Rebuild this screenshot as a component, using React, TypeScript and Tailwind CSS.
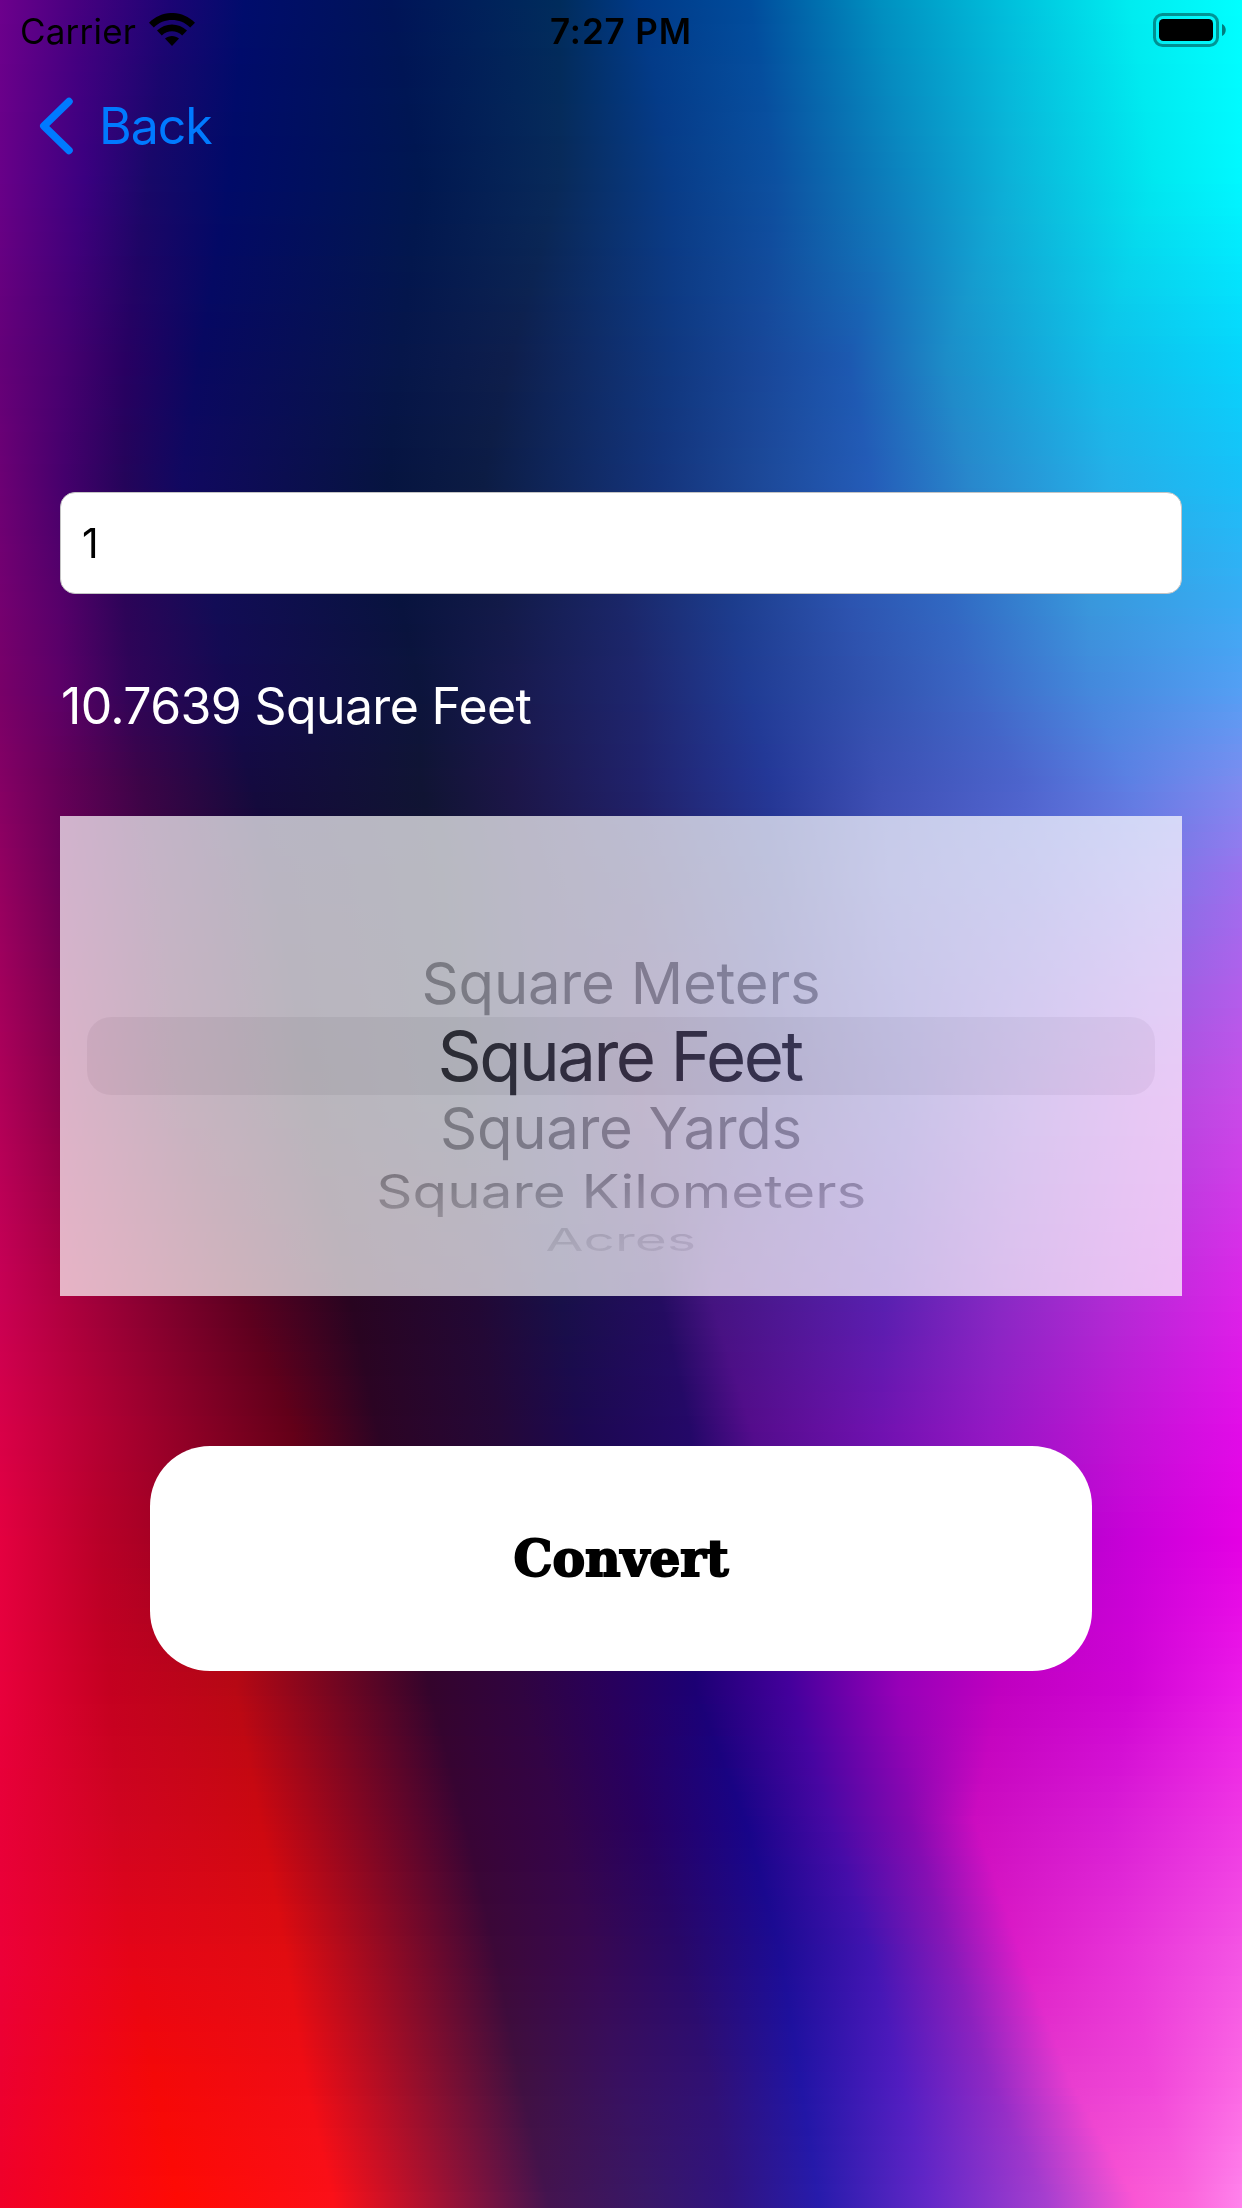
import React from "react";

type Stop = [number, string];
type Row = { y: number; stops: Stop[] };

// Colour field of the wallpaper: twelve colour ridges followed from top to bottom.
const FIELD: Row[] = [
  { y: 0, stops: [[0, "6c008c"], [75, "480080"], [170, "1c0474"], [245, "000c6c"], [390, "001458"], [560, "002c5c"], [640, "003a88"], [750, "004c9c"], [880, "0090c0"], [1010, "00c0dc"], [1130, "00ecf0"], [1242, "00ffff"]] },
  { y: 180, stops: [[0, "680088"], [85, "3a0080"], [148, "180868"], [230, "000a68"], [420, "001750"], [560, "082a5a"], [673, "083c88"], [776, "0c50a0"], [905, "0c86c0"], [1010, "0cb2d8"], [1155, "00e8f0"], [1242, "00f8ff"]] },
  { y: 360, stops: [[0, "640078"], [63, "480070"], [125, "280062"], [200, "080860"], [400, "06164a"], [510, "0e1e4c"], [673, "103880"], [760, "184698"], [848, "1c58b0"], [945, "1c8cc8"], [1100, "10bee8"], [1242, "06d4fc"]] },
  { y: 480, stops: [[0, "6c0074"], [65, "44006c"], [125, "24045a"], [182, "100860"], [388, "061440"], [483, "0c1c44"], [660, "14347c"], [760, "1c4898"], [871, "245cb8"], [970, "2888cc"], [1110, "24b0e8"], [1242, "18c0f8"]] },
  { y: 600, stops: [[0, "740070"], [60, "56006a"], [125, "2c0458"], [215, "120c56"], [400, "08133e"], [500, "121a48"], [620, "1a2668"], [730, "1c3c8c"], [850, "2c54b0"], [950, "3068c2"], [1090, "3898dc"], [1242, "38acf4"]] },
  { y: 690, stops: [[0, "780068"], [60, "5c0068"], [130, "300458"], [230, "140a50"], [420, "0c143c"], [520, "181a50"], [640, "1e266e"], [750, "203c94"], [860, "3050ac"], [970, "3c66c4"], [1090, "4488dc"], [1242, "549ff4"]] },
  { y: 780, stops: [[0, "840064"], [60, "640058"], [140, "3c0448"], [250, "140a40"], [420, "101434"], [510, "1c1648"], [640, "20226c"], [770, "243898"], [880, "3c50b4"], [1020, "4c64cc"], [1130, "5c80e4"], [1242, "7c8cf0"]] },
  { y: 830, stops: [[0, "8c0062"], [60, "680057"], [150, "3c0444"], [265, "140938"], [430, "111432"], [520, "1c1648"], [640, "211f66"], [770, "263592"], [885, "4250b6"], [1025, "5464d0"], [1140, "6c78e2"], [1242, "8c80f0"]] },
  { y: 880, stops: [[0, "940060"], [60, "6c0056"], [160, "3c0440"], [280, "140830"], [440, "121430"], [530, "1c1648"], [640, "221c60"], [770, "28328c"], [890, "4850b8"], [1030, "5c60d0"], [1150, "7c74e4"], [1242, "9c70ee"]] },
  { y: 1100, stops: [[0, "b00058"], [60, "8a0048"], [180, "480430"], [310, "180820"], [460, "121430"], [560, "1c1450"], [640, "301058"], [760, "302080"], [900, "4c38b0"], [1030, "8048cc"], [1150, "b048dc"], [1242, "c84ce8"]] },
  { y: 1296, stops: [[0, "c80054"], [63, "ae0040"], [240, "5c0020"], [350, "280420"], [475, "220834"], [560, "181048"], [660, "240c60"], [710, "441480"], [885, "5820b0"], [1000, "882ac4"], [1110, "b02cd4"], [1242, "dc24e8"]] },
  { y: 1430, stops: [[0, "d80048"], [95, "b40034"], [295, "620018"], [378, "2c0424"], [500, "240838"], [580, "1c0850"], [690, "240868"], [752, "540c8c"], [880, "7012b0"], [990, "9418c4"], [1120, "c014d4"], [1242, "e20ce8"]] },
  { y: 1540, stops: [[0, "e40040"], [100, "b80028"], [270, "800018"], [405, "300428"], [510, "28043c"], [620, "1c0858"], [700, "200470"], [780, "480490"], [900, "7808b0"], [1020, "a804c4"], [1130, "c800d8"], [1242, "e400e4"]] },
  { y: 1690, stops: [[0, "e8003c"], [110, "c40020"], [235, "b80814"], [430, "34042c"], [520, "300440"], [610, "28005c"], [695, "1c0074"], [790, "44009c"], [900, "9800b8"], [1000, "c000c0"], [1130, "d004d4"], [1242, "ec1ce8"]] },
  { y: 1820, stops: [[0, "e80038"], [120, "d00420"], [260, "cc0810"], [465, "380434"], [560, "340448"], [640, "280060"], [745, "180488"], [830, "4808a4"], [910, "8408b0"], [975, "cc0cc0"], [1110, "d81cd4"], [1242, "f038e4"]] },
  { y: 1950, stops: [[0, "ec0038"], [130, "e40418"], [285, "e00c10"], [495, "3c0838"], [590, "380850"], [680, "280868"], [780, "1c0c94"], [870, "4014b0"], [950, "8818b8"], [1020, "dc1cc8"], [1130, "e834d8"], [1242, "f454e4"]] },
  { y: 2080, stops: [[0, "ec0030"], [155, "f40808"], [305, "f00c14"], [520, "401040"], [620, "381060"], [710, "301074"], [800, "2014a4"], [900, "501cc0"], [990, "9028c4"], [1070, "e83cd0"], [1150, "f044d8"], [1242, "fc68e4"]] },
  { y: 2208, stops: [[0, "f00028"], [180, "ff0a04"], [335, "fc1018"], [550, "441450"], [650, "381868"], [730, "301480"], [820, "281cac"], [930, "6428c8"], [1050, "a840d0"], [1140, "fc58d4"], [1190, "fc68dc"], [1242, "ff84ec"]] },
];

const STRIP = 8;
const channel = (c: string, i: number) => parseInt(c.slice(i * 2, i * 2 + 2), 16);

function stripGradient(y: number) {
  let k = 0;
  while (k < FIELD.length - 2 && FIELD[k + 1].y < y) k++;
  const a = FIELD[k];
  const b = FIELD[k + 1];
  const t = (y - a.y) / (b.y - a.y);
  const mix = (p: number, q: number) => p + (q - p) * t;
  const stops = a.stops.map(([x, c], i) => {
    const [x2, c2] = b.stops[i];
    const rgb = [0, 1, 2].map((n) => Math.round(mix(channel(c, n), channel(c2, n))));
    return `rgb(${rgb.join(",")}) ${mix(x, x2).toFixed(1)}px`;
  });
  return `linear-gradient(to right, ${stops.join(", ")})`;
}

function Wallpaper() {
  return (
    <div className="absolute inset-0 flex flex-col overflow-hidden" aria-hidden="true">
      {Array.from({ length: 2208 / STRIP }, (_, i) => (
        <div key={i} className="h-2 w-full shrink-0" style={{ backgroundImage: stripGradient(i * STRIP + STRIP / 2) }} />
      ))}
    </div>
  );
}

function StatusBar() {
  return (
    <header className="grid h-[60px] grid-cols-3 items-start text-[35px] leading-[62px] text-black">
      <div className="flex pl-5">
        <span className="w-[129px] tracking-[0.2px]">Carrier</span>
        <svg className="mt-[13px] h-[33px] w-[46px]" viewBox="0 0 46 33">
          <path d="M0 9.8C13-3.3 33-3.3 46 9.8L41.2 14.4C31 4.600 15 4.600 4.800 14.400Z" />
          <path d="M8 17.600C16.500 9.600 29.500 9.600 38 17.600L33.200 22.400C27.300 17 18.700 17 12.800 22.400Z" />
          <path d="M16 25.600C20 22 26 22 30 25.600L23 33Z" />
        </svg>
      </div>
      <span className="text-center font-semibold tracking-[0.9px]">7:27 PM</span>
      <div className="flex justify-end pr-4 pt-[13px]">
        <svg className="h-[34px] w-[73px]" viewBox="0 0 73 34">
          <rect x="1.500" y="1.500" width="63" height="31" rx="8" fill="none" stroke="#000" strokeOpacity="0.4" strokeWidth="3" />
          <rect x="6" y="6" width="54" height="22" rx="4.500" />
          <path d="M69 11C74 13 74 21 69 23Z" fillOpacity="0.5" />
        </svg>
      </div>
    </header>
  );
}

const UNITS = [
  { name: "Square Meters", box: "h-[74px] mt-[130px]", text: "text-[58px] tracking-[-0.2px] text-[#3e3e3e]" },
  { name: "Square Feet", box: "h-[74px]", text: "pr-[3px] text-[69px] tracking-[-2.5px] text-[#828282]" },
  { name: "Square Yards", box: "h-[69px]", text: "text-[58px] tracking-[-0.3px] text-[#3e3e3e]" },
  {
    name: "Square Kilometers",
    box: "h-[57px]",
    text: "text-[58px] scale-x-[0.975] scale-y-80 bg-linear-to-b from-[#404040] from-20% to-[#282828] to-85% bg-clip-text text-transparent",
  },
  {
    name: "Acres",
    box: "h-[39px]",
    text: "text-[54px] scale-x-[1.02] scale-y-[0.58] bg-linear-to-b from-[#181818] from-20% to-[#0e0e0e] to-85% bg-clip-text text-transparent",
  },
];

function UnitPicker() {
  return (
    <section className="relative mx-[60px] mt-[60px] flex h-[480px] flex-col items-center bg-white/70">
      <div className="absolute left-[27px] top-[201px] h-[78px] w-[1068px] rounded-[24px] bg-[#0a0a0a] mix-blend-difference" />
      {UNITS.map((u) => (
        <div key={u.name} className={`flex shrink-0 items-center justify-center whitespace-nowrap mix-blend-difference ${u.box}`}>
          <span className={u.text}>{u.name}</span>
        </div>
      ))}
    </section>
  );
}

export default function App() {
  return (
    <main className="relative h-[2208px] w-[1242px] overflow-hidden bg-black font-['Inter',sans-serif]">
      <Wallpaper />
      <div className="relative flex flex-col">
        <StatusBar />
        <nav className="flex h-[132px] items-center pl-[39px] text-[#007aff]">
          <svg className="h-[58px] w-[35px]" viewBox="0 0 35 58" fill="none" stroke="currentColor" strokeWidth="7.500" strokeLinecap="round" strokeLinejoin="round">
            <path d="M30 4.500L4.800 29L30 53.500" />
          </svg>
          <span className="ml-[25px] text-[50px] tracking-[-1px]">Back</span>
        </nav>
        <div className="mx-[60px] mt-[300px] flex h-[102px] items-center rounded-[15px] border border-[#c4c4c4] bg-white pl-[21px] pt-0.5 text-[41px] text-black">1</div>
        <p className="mx-[60px] mt-[72px] h-[90px] whitespace-nowrap pl-px text-[50px] leading-[80px] tracking-[-0.65px] text-white">10.7639 Square Feet</p>
        <UnitPicker />
        <button className="mx-[150px] mt-[150px] flex h-[225px] items-center justify-center rounded-[60px] bg-white">
          <span className="scale-x-[0.96] font-['DejaVu_Serif',serif] text-[51px] font-bold text-black [-webkit-text-stroke:2px_black]">Convert</span>
        </button>
      </div>
    </main>
  );
}
